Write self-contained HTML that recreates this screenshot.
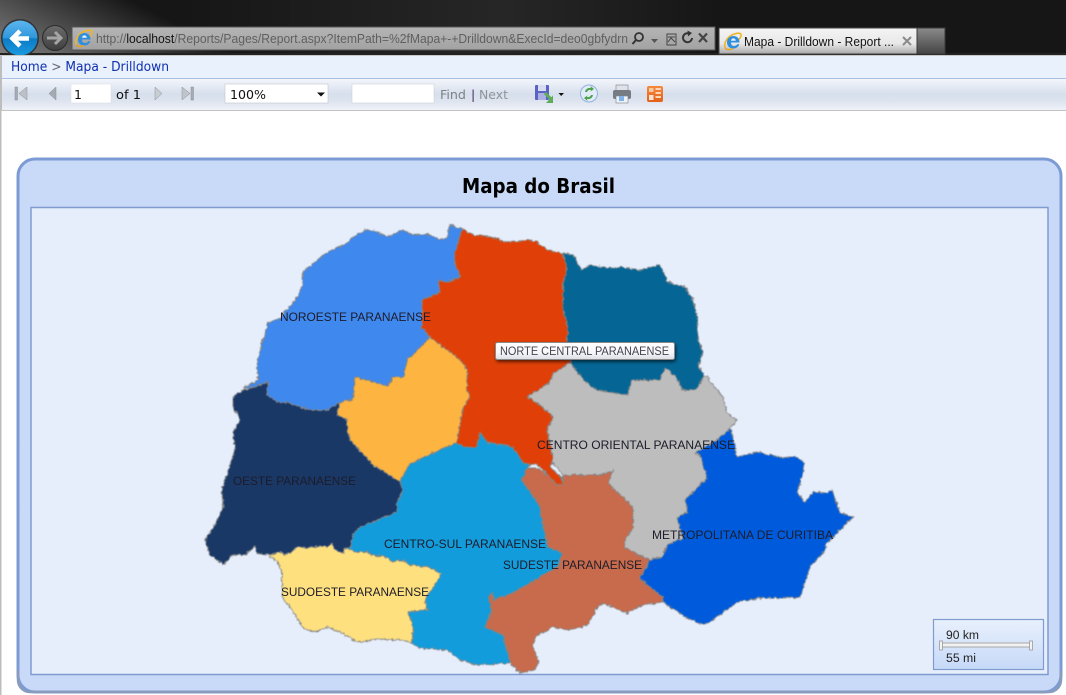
<!DOCTYPE html>
<html><head><meta charset="utf-8"><title>Mapa - Drilldown</title>
<style>html,body{margin:0;padding:0;background:#fff;overflow:hidden}svg{display:block}</style></head>
<body>
<svg xmlns="http://www.w3.org/2000/svg" width="1066" height="695" viewBox="0 0 1066 695">
<defs>
<linearGradient id="top" gradientUnits="userSpaceOnUse" x1="0" y1="50" x2="46" y2="-42"><stop offset="0" stop-color="#7c7c7c"/><stop offset=".45" stop-color="#4e4e4e"/><stop offset="1" stop-color="#161616"/></linearGradient>
<linearGradient id="sweep" gradientUnits="userSpaceOnUse" x1="180" y1="0" x2="720" y2="0"><stop offset="0" stop-color="#fff" stop-opacity="0"/><stop offset=".6" stop-color="#fff" stop-opacity=".07"/><stop offset="1" stop-color="#fff" stop-opacity="0"/></linearGradient>
<linearGradient id="tb" x1="0" y1="0" x2="0" y2="1"><stop offset="0" stop-color="#f3f5fb"/><stop offset=".5" stop-color="#d6dfec"/><stop offset=".75" stop-color="#dfe5f0"/><stop offset="1" stop-color="#eef1f8"/></linearGradient>
<linearGradient id="addr" x1="0" y1="0" x2="0" y2="1"><stop offset="0" stop-color="#b5b5b5"/><stop offset="1" stop-color="#a2a2a2"/></linearGradient>
<linearGradient id="tab" x1="0" y1="0" x2="0" y2="1"><stop offset="0" stop-color="#f4f4f4"/><stop offset=".6" stop-color="#e8e8e8"/><stop offset="1" stop-color="#a8a8a8"/></linearGradient>
<linearGradient id="ntab" x1="0" y1="0" x2="0" y2="1"><stop offset="0" stop-color="#8a8a8a"/><stop offset="1" stop-color="#444"/></linearGradient>
<linearGradient id="back" x1="0" y1="0" x2="0" y2="1"><stop offset="0" stop-color="#5cb6ee"/><stop offset=".5" stop-color="#2f97dc"/><stop offset=".52" stop-color="#0c7cc6"/><stop offset="1" stop-color="#1a9ae0"/></linearGradient>
<linearGradient id="fwd" x1="0" y1="0" x2="0" y2="1"><stop offset="0" stop-color="#6c6c6c"/><stop offset="1" stop-color="#3e3e3e"/></linearGradient>
<linearGradient id="scale" x1="0" y1="0" x2="0" y2="1"><stop offset="0" stop-color="#e8f0fc"/><stop offset="1" stop-color="#c6d9f8"/></linearGradient>
<linearGradient id="tip" x1="0" y1="0" x2="0" y2="1"><stop offset="0" stop-color="#fff"/><stop offset=".6" stop-color="#f6f6f8"/><stop offset="1" stop-color="#dcdde6"/></linearGradient>
<linearGradient id="or" x1="0" y1="0" x2="0" y2="1"><stop offset="0" stop-color="#f58a3c"/><stop offset="1" stop-color="#e4601a"/></linearGradient>
<filter id="jag" filterUnits="userSpaceOnUse" x="190" y="210" width="680" height="475" color-interpolation-filters="sRGB">
<feTurbulence type="fractalNoise" baseFrequency="0.3" numOctaves="2" seed="4" result="n"/>
<feDisplacementMap in="SourceGraphic" in2="n" scale="4" xChannelSelector="R" yChannelSelector="G"/>
<feGaussianBlur stdDeviation="0.4"/>
</filter>
<filter id="sh" x="-10%" y="-30%" width="120%" height="170%"><feDropShadow dx="1" dy="2" stdDeviation="1.5" flood-color="#000" flood-opacity=".6"/></filter>
<filter id="soft"><feGaussianBlur stdDeviation="0.3"/></filter>
<g id="ie">
<path d="M1.500 16C-1 12 3 5 9 2.500 12.500 1 16.500 .5 17 2.500 17.500 4.500 15.500 7 13.500 9" fill="none" stroke="#f0b429" stroke-width="1.600"/>
<path d="M3 10.500C3 6.500 6 4 9.500 4 13 4 15.500 6.500 15.500 10.500H7C7 13 8.500 14 10 14 11.500 14 12.600 13.400 13.200 12.300H15.400C14.500 14.800 12.500 16.500 9.500 16.500 5.800 16.500 3 14.200 3 10.500Z" fill="#2f8fdc"/>
<path d="M7 8.700H11.800C11.600 7.400 10.800 6.400 9.400 6.400 8 6.400 7.200 7.400 7 8.700Z" fill="#e8f2fb"/>
<path d="M1 16C2.500 18 6 18 9 16.500" fill="none" stroke="#e9a21f" stroke-width="1.400"/>
</g>
</defs>

<!-- window chrome -->
<rect x="0" y="0" width="1066" height="54" fill="url(#top)"/>
<rect x="0" y="0" width="1066" height="54" fill="url(#sweep)"/>
<rect x="0" y="53" width="1066" height="2" fill="#222"/>
<circle cx="20" cy="38" r="19" fill="#333"/>
<circle cx="20" cy="38" r="17.500" fill="url(#back)"/>
<path d="M13 38.500H29" stroke="#fff" stroke-width="4.500" fill="none"/>
<path d="M20 31L12.500 38.500 20 46" stroke="#fff" stroke-width="4.500" fill="none"/>
<circle cx="55" cy="38" r="12.500" fill="url(#fwd)" stroke="#2a2a2a"/>
<path d="M47 38H61" stroke="#a5a5a5" stroke-width="3" fill="none"/>
<path d="M55 32L61 38 55 44" stroke="#a5a5a5" stroke-width="3" fill="none"/>

<rect x="72" y="27" width="643" height="23" fill="url(#addr)" stroke="#555"/>
<use href="#ie" x="75" y="29"/>
<text x="96" y="43" font-family="'Liberation Sans',sans-serif" font-size="12.500" fill="#5f5f5f" textLength="532" lengthAdjust="spacingAndGlyphs">http://<tspan fill="#111">localhost</tspan>/Reports/Pages/Report.aspx?ItemPath=%2fMapa+-+Drilldown&amp;ExecId=deo0gbfydrn</text>
<circle cx="639" cy="37" r="4" fill="none" stroke="#333" stroke-width="1.800"/><path d="M636 40L632.500 44" stroke="#333" stroke-width="2"/>
<path d="M651 39H658L654.500 43Z" fill="#555"/>
<rect x="667" y="34" width="9" height="11" fill="none" stroke="#444"/><path d="M668 42L671 38 675 42M668 37H675" stroke="#444" fill="none"/>
<path d="M692 38A4.500 4.500 0 1 1 689 33.500" fill="none" stroke="#333" stroke-width="2"/><path d="M687.500 30.500L692 33 688 36.500Z" fill="#333"/>
<path d="M699 33.500L707 42M707 33.500L699 42" stroke="#444" stroke-width="2.200"/>

<rect x="719" y="28" width="198" height="26" fill="url(#tab)" stroke="#444"/>
<use href="#ie" x="724" y="32"/>
<text x="744" y="46" font-family="'Liberation Sans',sans-serif" font-size="12.500" fill="#111" textLength="150" lengthAdjust="spacingAndGlyphs">Mapa - Drilldown - Report ...</text>
<path d="M903 37L911 45M911 37L903 45" stroke="#8a8a8a" stroke-width="2"/>
<rect x="917" y="28" width="28" height="26" fill="url(#ntab)" stroke="#3a3a3a"/>

<!-- breadcrumb -->
<rect x="0" y="55" width="1066" height="2" fill="#c8c8c8"/>
<rect x="2" y="56" width="1064" height="22" fill="#e9f1fc"/>
<rect x="0" y="56" width="2" height="55" fill="#bdbdbd"/>
<rect x="2" y="78" width="1064" height="1" fill="#a6bfe2"/>
<text x="11" y="71" font-family="'DejaVu Sans',sans-serif" font-size="13" fill="#1030b0" textLength="158" lengthAdjust="spacingAndGlyphs">Home <tspan fill="#667">&gt;</tspan> Mapa - Drilldown</text>

<!-- toolbar -->
<rect x="2" y="79" width="1064" height="31" fill="url(#tb)"/>
<rect x="0" y="110" width="1066" height="1" fill="#c2c2c2"/>
<g fill="#a6abb3" stroke="#8b9098" stroke-width=".5">
<rect x="15" y="87" width="2.500" height="13"/><path d="M27 87V100L19 93.500Z" fill="#bcc1c8"/>
<path d="M56 87V100L49 93.500Z"/>
<path d="M155 87V100L162 93.500Z" fill="#c8ccd3"/>
<path d="M182 87V100L190 93.500Z" fill="#c0c4cb"/><rect x="191" y="87" width="2.500" height="13"/>
</g>
<rect x="71" y="84" width="40" height="19" fill="#fff" stroke="#d9dde6" stroke-width=".5"/>
<g font-family="'DejaVu Sans',sans-serif" font-size="12.500" fill="#111">
<text x="74" y="99">1</text>
<text x="116" y="99" textLength="25" lengthAdjust="spacingAndGlyphs">of 1</text>
</g>
<rect x="225" y="84" width="103" height="19" fill="#fff" stroke="#b9bdc6" stroke-width=".5"/>
<text x="230" y="99" font-family="'DejaVu Sans',sans-serif" font-size="12.500" fill="#111" textLength="36" lengthAdjust="spacingAndGlyphs">100%</text>
<path d="M317 92.500H325L321 96.500Z" fill="#111"/>
<rect x="352" y="84" width="82" height="19" fill="#fff" stroke="#c8ccd4" stroke-width=".5"/>
<text x="440" y="99" font-family="'DejaVu Sans',sans-serif" font-size="12.500" fill="#7d8187" textLength="26" lengthAdjust="spacingAndGlyphs">Find</text>
<text x="471" y="99" font-family="'DejaVu Sans',sans-serif" font-size="12.500" fill="#4a2a6a">|</text>
<text x="479" y="99" font-family="'DejaVu Sans',sans-serif" font-size="12.500" fill="#8f9399" textLength="29" lengthAdjust="spacingAndGlyphs">Next</text>

<!-- save -->
<rect x="535" y="85" width="14" height="15" rx="1" fill="#5a62c4"/>
<rect x="538" y="85" width="8" height="6" fill="#d8dcf0"/><rect x="538" y="93" width="8" height="7" fill="#aab0e4"/>
<path d="M545 93L551 99" stroke="#5cac58" stroke-width="3" fill="none"/>
<path d="M553 95.500V103H546Z" fill="#5cac58"/>
<path d="M558.500 93H564L561.200 96Z" fill="#111"/>
<!-- refresh -->
<circle cx="589" cy="93.500" r="8.500" fill="#e2ecf8" stroke="#8fb2de"/>
<path d="M585 92C585.500 89 588 87.500 591 88L590.500 86 594 89 590.500 91.500 591 90C589 89.500 587.500 90.500 587 92Z" fill="#4ba24a"/>
<path d="M593 95C592.500 98 590 99.500 587 99L587.500 101 584 98 587.500 95.500 587 97C589 97.500 590.500 96.500 591 95Z" fill="#4ba24a"/>
<!-- print -->
<rect x="616" y="85" width="12" height="6" fill="#dfe2e8" stroke="#7d8288" stroke-width=".6"/>
<rect x="613" y="90" width="18" height="9" rx="2" fill="#777c84"/>
<rect x="616" y="96" width="12" height="7" fill="#eef2f8" stroke="#7d8288" stroke-width=".6"/>
<rect x="619" y="96" width="5" height="5" fill="#7fb2e8"/>
<!-- orange -->
<rect x="647" y="86" width="16" height="16" rx="2" fill="url(#or)"/>
<rect x="649" y="88" width="4.500" height="4" fill="#f9c9a2"/><rect x="649" y="95" width="4.500" height="5" fill="#fbe3cf"/>
<rect x="655.500" y="88" width="5.500" height="2" fill="#fbd6b8"/><rect x="655.500" y="92" width="5.500" height="2" fill="#fbd6b8"/><rect x="655.500" y="96" width="5.500" height="2" fill="#fbd6b8"/>

<!-- page -->
<rect x="0" y="111" width="1066" height="584" fill="#fff"/>
<rect x="0" y="111" width="1.500" height="584" fill="#bdbdbd"/>
<rect x="18" y="159" width="1043" height="533" rx="17" fill="#c8daf8" stroke="#7c9bd4" stroke-width="3"/>
<path d="M18 670V680A12 12 0 0 0 30 692H1049A12 12 0 0 0 1061 680V670" fill="none" stroke="#8a9cbc" stroke-width="2.500"/>
<rect x="31" y="207.500" width="1017" height="467" fill="#e6eefb" stroke="#7f9bd0" stroke-width="1.500"/>
<text x="462" y="193" font-family="'DejaVu Sans',sans-serif" font-weight="bold" font-size="20" fill="#000" textLength="153" lengthAdjust="spacingAndGlyphs">Mapa do Brasil</text>

<!-- map -->
<g filter="url(#jag)" stroke="#858585" stroke-width="1" stroke-linejoin="round">
<polygon fill="#3f88ee" points="243,388 258,380 257,363 262,343 268,323 280,318 295,300 302,288 303,272 315,262 328,252 347,243 354,236 367,230 375,231 387,237 403,230 413,235 427,234 440,240 447,238 450,225 462,229 455,253 455,263 460,277 447,282 438,280 440,292 422,300 422,327 430,337 413,355 408,358 403,377 393,377 388,386 355,377 353,399 340,402 328,410 308,410 290,403 277,402 267,395 268,382 255,387"/>
<polygon fill="#fdb440" points="430,337 440,345 457,357 467,368 467,390 470,397 463,408 458,437 457,443 440,450 410,464 400,482 373,465 350,440 348,430 347,420 337,415 340,402 353,399 355,377 388,386 393,377 403,377 408,358 413,355"/>
<polygon fill="#1a3866" points="233,397 243,390 255,387 268,382 267,395 277,402 290,403 308,410 328,410 340,402 337,415 347,420 348,430 350,440 373,465 400,482 403,490 397,503 397,512 373,522 360,527 353,535 351,547 345,548 343,553 335,550 332,543 327,547 320,546 307,548 298,547 287,555 280,552 268,555 257,553 255,546 245,555 233,555 223,565 210,555 205,540 215,525 223,507 222,490 228,470 235,450 233,433 240,420 233,407"/>
<polygon fill="#129cdc" points="457,443 467,448 477,447 480,432 487,442 513,447 525,462 530,465 522,480 540,507 543,525 548,547 562,553 558,567 548,572 530,583 513,593 493,600 493,592 488,597 492,610 485,627 503,635 510,663 477,665 460,660 447,650 420,648 412,643 413,628 408,612 427,610 425,598 433,588 441,574 430,567 410,565 403,560 392,562 383,555 377,557 367,552 357,552 345,548 351,547 353,535 360,527 373,522 397,512 397,503 403,490 400,482 410,464 440,450"/>
<polygon fill="#fee07e" points="268,555 280,552 287,555 298,547 307,548 320,546 327,547 332,543 335,550 343,553 345,548 357,552 367,552 377,557 383,555 392,562 403,560 410,565 430,567 441,574 433,588 425,598 427,610 408,612 413,628 412,643 400,640 377,639 357,642 340,632 327,627 315,632 303,628 292,610 282,597 282,573 278,562"/>
<polygon fill="#bdbdbd" points="570,363 587,383 597,390 627,395 632,380 660,380 665,367 677,378 683,390 695,390 705,375 723,397 727,413 737,420 730,428 717,440 695,453 700,455 707,478 685,500 688,512 677,518 683,538 668,545 662,557 650,560 625,548 625,540 633,527 633,507 618,493 608,483 613,470 608,473 597,475 563,475 550,460 553,457 547,430 553,417 540,405 527,397 550,382 553,373"/>
<polygon fill="#056696" points="562,253 573,255 582,270 590,265 607,268 620,267 640,270 660,265 668,282 685,287 693,300 697,317 698,340 703,353 698,367 705,375 695,390 683,390 677,378 665,367 660,380 632,380 627,395 597,390 587,383 570,363 567,342 568,327 563,310 563,283 567,268"/>
<polygon fill="#c76b4c" points="527,468 538,468 550,477 557,485 563,485 563,475 597,475 608,473 613,470 608,483 618,493 633,507 633,527 625,540 625,548 650,560 640,578 650,587 663,597 662,602 643,605 627,613 603,603 597,607 588,625 570,630 552,627 535,637 533,647 539,662 535,670 520,673 510,663 503,635 485,627 492,610 488,597 493,592 493,600 513,593 530,583 548,572 558,567 562,553 548,547 543,525 540,507 522,480"/>
<polygon fill="#005bdc" points="730,428 733,437 737,457 757,452 780,457 797,457 805,463 800,483 797,493 805,502 813,492 827,493 832,490 840,513 853,517 827,543 823,553 810,567 800,597 763,598 737,602 713,620 703,625 687,618 663,602 663,597 650,587 640,578 650,560 662,557 668,545 683,538 677,518 688,512 685,500 707,478 700,455 695,453 717,440"/>
<polygon fill="#e04007" points="462,229 473,235 487,236 507,242 530,240 537,242 547,250 562,253 567,268 563,283 563,310 568,327 567,342 570,363 553,373 550,382 527,397 540,405 553,417 547,430 553,457 550,467 562,478 563,485 557,485 548,475 538,465 523,463 515,450 513,447 487,442 480,432 477,447 467,448 457,443 458,437 463,408 470,397 467,390 467,368 457,357 440,345 430,337 422,327 422,300 440,292 438,280 447,282 460,277 455,263 455,253"/>
</g>

<g font-family="'Liberation Sans',sans-serif" font-size="12" fill="#1c1c2a" filter="url(#soft)">
<text x="280" y="321" textLength="151" lengthAdjust="spacingAndGlyphs">NOROESTE PARANAENSE</text>
<text x="537" y="449" textLength="198" lengthAdjust="spacingAndGlyphs">CENTRO ORIENTAL PARANAENSE</text>
<text x="233" y="485" textLength="123" lengthAdjust="spacingAndGlyphs">OESTE PARANAENSE</text>
<text x="384" y="548" textLength="162" lengthAdjust="spacingAndGlyphs">CENTRO-SUL PARANAENSE</text>
<text x="503" y="569" textLength="139" lengthAdjust="spacingAndGlyphs">SUDESTE PARANAENSE</text>
<text x="652" y="539" textLength="181" lengthAdjust="spacingAndGlyphs">METROPOLITANA DE CURITIBA</text>
<text x="281" y="596" textLength="148" lengthAdjust="spacingAndGlyphs">SUDOESTE PARANAENSE</text>
</g>

<!-- tooltip -->
<rect x="495.500" y="342.500" width="179" height="17" rx="2" fill="url(#tip)" stroke="#8a8a8a" filter="url(#sh)"/>
<text x="500" y="355" font-family="'Liberation Sans',sans-serif" font-size="12" fill="#444452" textLength="169" lengthAdjust="spacingAndGlyphs">NORTE CENTRAL PARANAENSE</text>

<!-- scale -->
<rect x="933.500" y="619.500" width="110" height="50" fill="url(#scale)" stroke="#7f9bd0" stroke-width="1.200"/>
<rect x="941" y="643" width="90" height="4" fill="#f2f2f2" stroke="#a8a8a8"/>
<rect x="939.500" y="641" width="3" height="9" fill="#f2f2f2" stroke="#999" stroke-width=".8"/>
<rect x="1029.500" y="641" width="3" height="9" fill="#f2f2f2" stroke="#999" stroke-width=".8"/>
<g font-family="'Liberation Sans',sans-serif" font-size="11.500" fill="#222">
<text x="946" y="639" textLength="33" lengthAdjust="spacingAndGlyphs">90 km</text>
<text x="946" y="662" textLength="30" lengthAdjust="spacingAndGlyphs">55 mi</text>
</g>
</svg>
</body></html>
